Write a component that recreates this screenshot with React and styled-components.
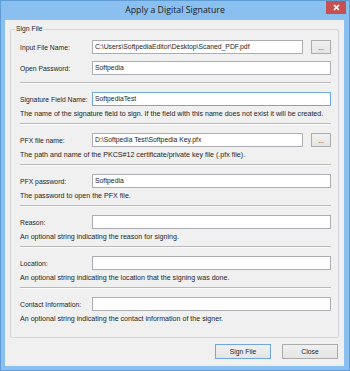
import styled, { createGlobalStyle } from "styled-components";

const GlobalStyle = createGlobalStyle`
  html, body { margin: 0; padding: 0; background: #fff; }
  body { font-family: "Liberation Sans", Arial, sans-serif; color: #1e1e1e; }
  * { box-sizing: border-box; }
`;

const Window = styled.div`
  width: 350px;
  height: 371px;
  background: #8ac0f0;
  border: 1px solid #5f9bd4;
  display: flex;
  flex-direction: column;
`;

const TitleBar = styled.div`
  height: 19px;
  display: grid;
  grid-template-columns: 1fr auto 1fr;
  align-items: start;
`;

const Title = styled.div`
  grid-column: 2;
  font-family: "Open Sans", "Liberation Sans", sans-serif;
  font-size: 8.8px;
  line-height: 19px;
  color: #1b1b1b;
`;

const CloseButton = styled.button`
  grid-column: 3;
  justify-self: end;
  width: 20px;
  height: 13px;
  margin-right: 3px;
  padding: 0;
  border: none;
  background: #c75050;
  display: flex;
  align-items: center;
  justify-content: center;
`;

const Client = styled.div`
  flex: 1;
  margin: 0 5px 4px 4px;
  background: #f0f0f0;
  padding: 4px 5px 0 5px;
  display: flex;
  flex-direction: column;
`;

const GroupBox = styled.fieldset`
  margin: 0;
  padding: 6px 7px 13px 9px;
  border: 1px solid #d5d5d5;
  border-radius: 2px;
  display: flex;
  flex-direction: column;
`;

const Legend = styled.legend`
  font-size: 6.8px;
  line-height: 10px;
  padding: 0 1px;
  margin-left: -5px;
`;

const Row = styled.div`
  display: grid;
  grid-template-columns: 64px 1fr 20px;
  column-gap: 8px;
  align-items: center;
  margin-top: ${(p) => p.$gap || 0}px;
`;

const Label = styled.label`
  font-size: 6.8px;
  white-space: nowrap;
`;

const TextBox = styled.div`
  grid-column: ${(p) => (p.$browse ? "2" : "2 / span 2")};
  height: 14px;
  background: #fff;
  border: 1px solid ${(p) => (p.$focused ? "#6ea8e3" : "#abadb3")};
  padding: 0 2px;
  font-size: 6.8px;
  line-height: 12px;
  white-space: nowrap;
  overflow: hidden;
`;

const Button = styled.button`
  height: ${(p) => p.$h || 15}px;
  width: ${(p) => p.$w || 56}px;
  padding: 0;
  font-family: "Liberation Sans", Arial, sans-serif;
  font-size: 6.8px;
  color: #1e1e1e;
  background: linear-gradient(#f0f0f0, #e5e5e5);
  border: 1px solid ${(p) => (p.$default ? "#6fa6de" : "#acacac")};
`;

const Hint = styled.div`
  font-size: 7.1px;
  line-height: 10px;
  margin-top: 3px;
  white-space: nowrap;
`;

const Divider = styled.div`
  height: 2px;
  border-top: 1px solid #b9b9b9;
  border-bottom: 1px solid #fbfbfb;
  margin: ${(p) => p.$top || 4}px 0 8px;
`;

const ButtonBar = styled.div`
  display: flex;
  justify-content: flex-end;
  gap: 11px;
  margin-top: 6px;
  padding-right: 1px;
`;

const sections = [
  {
    label: "Signature Field Name:",
    value: "SoftpediaTest",
    focused: true,
    hint: "The name of the signature field to sign. If the field with this name does not exist it will be created.",
  },
  {
    label: "PFX file name:",
    value: "D:\\Softpedia Test\\Softpedia Key.pfx",
    browse: true,
    hint: "The path and name of the PKCS#12 certificate/private key file (.pfx file).",
  },
  { label: "PFX password:", value: "Softpedia", hint: "The password to open the PFX file." },
  { label: "Reason:", value: "", hint: "An optional string indicating the reason for signing." },
  { label: "Location:", value: "", hint: "An optional string indicating the location that the signing was done." },
  { label: "Contact Information:", value: "", hint: "An optional string indicating the contact information of the signer." },
];

const Field = ({ label, value, browse, focused, gap }) => (
  <Row $gap={gap}>
    <Label>{label}</Label>
    <TextBox $browse={browse} $focused={focused}>{value}</TextBox>
    {browse && <Button $w={20} $h={14}>...</Button>}
  </Row>
);

export default function App() {
  return (
    <>
      <GlobalStyle />
      <Window>
        <TitleBar>
          <Title>Apply a Digital Signature</Title>
          <CloseButton aria-label="Close">
            <svg width="7" height="7" viewBox="0 0 7 7">
              <path d="M1 1L6 6M6 1L1 6" stroke="#fff" strokeWidth="1.6" />
            </svg>
          </CloseButton>
        </TitleBar>
        <Client>
          <GroupBox>
            <Legend>Sign File</Legend>
            <Field label="Input File Name:" value="C:\Users\SoftpediaEditor\Desktop\Scaned_PDF.pdf" browse />
            <Field label="Open Password:" value="Softpedia" gap={7} />
            <Divider $top={7} />
            {sections.map((s, i) => (
              <div key={s.label}>
                <Field {...s} />
                <Hint>{s.hint}</Hint>
                {i < sections.length - 1 && <Divider />}
              </div>
            ))}
          </GroupBox>
          <ButtonBar>
            <Button $default>Sign File</Button>
            <Button>Close</Button>
          </ButtonBar>
        </Client>
      </Window>
    </>
  );
}
